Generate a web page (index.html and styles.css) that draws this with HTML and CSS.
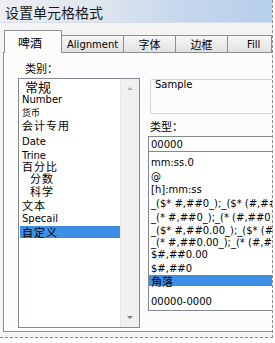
FILE: index.html
```html
<!DOCTYPE html>
<html lang="zh-CN">
<head>
  <meta charset="UTF-8">
  <title>设置单元格格式</title>
  <link rel="stylesheet" href="styles.css">
</head>
<body>
  <div class="window">
    <div class="titlebar">设置单元格格式</div>

    <div class="tabs">
      <div class="tab active">啤酒</div>
      <div class="tab tab-align">Alignment</div>
      <div class="tab tab-font">字体</div>
      <div class="tab tab-border">边框</div>
      <div class="tab tab-fill">Fill</div>
    </div>

    <div class="panel">
      <!-- 类别 -->
      <div class="col-left">
        <div class="label">类别：</div>
        <div class="listbox">
          <ul class="categories">
            <li class="c1 indent big">常规</li>
            <li class="c2">Number</li>
            <li class="c3 small">货币</li>
            <li class="c4 wide">会计专用</li>
            <li class="c5">Date</li>
            <li class="c6">Trine</li>
            <li class="c7 wide">百分比</li>
            <li class="c8 indent2 wide">分数</li>
            <li class="c9 indent2 wide">科学</li>
            <li class="c10 wide">文本</li>
            <li class="c11">Specail</li>
            <li class="c12 wide selected">自定义</li>
          </ul>
          <div class="scrollbar">
            <span class="arrow up"></span>
            <span class="arrow down"></span>
          </div>
        </div>
      </div>

      <!-- 类型 -->
      <div class="col-right">
        <div class="sample"><span>Sample</span></div>
        <div class="label type-label">类型：</div>
        <div class="input">00000</div>
        <ul class="types">
          <li class="t1">mm:ss.0</li>
          <li class="t2">@</li>
          <li class="t3">[h]:mm:ss</li>
          <li class="t4">_($* #,##0_);_($* (#,##0);_($* "-"_);_(@_)</li>
          <li class="t5">_(* #,##0_);_(* (#,##0);_(* "-"_);_(@_)</li>
          <li class="t6">_($* #,##0.00_);_($* (#,##0.00);_($* "-"??_);_(@_)</li>
          <li class="t7">_(* #,##0.00_);_(* (#,##0.00);_(* "-"??_);_(@_)</li>
          <li class="t8">$#,##0.00</li>
          <li class="t9">$#,##0</li>
          <li class="t10 cjk selected">角落</li>
          <li class="t11">00000-0000</li>
        </ul>
      </div>
    </div>
  </div>
</body>
</html>
```

FILE: styles.css
```css
body {
  margin: 0;
  background: #fff;
  font-family: "DejaVu Sans", Verdana, "Noto Sans CJK SC", sans-serif;
  color: #000;
}
.window {
  width: 272px;
  height: 337px;
  overflow: hidden;
  background: #f4f4f4;
  border-right: 1px dashed #8a8a8a;
  border-bottom: 1px dashed #8a8a8a;
}
.titlebar {
  height: 23px;
  line-height: 24px;
  padding-left: 5px;
  font-family: "Noto Sans CJK SC", sans-serif;
  font-size: 14px;
  color: #1a1a1a;
  background: linear-gradient(to right, #eceef1 0%, #dfe6ef 35%, #c3d6ec 70%, #b8cfea 100%);
  border-bottom: 1px solid #d4dde8;
  box-sizing: border-box;
}
.tabs {
  display: flex;
  align-items: flex-end;
  height: 29px;
  padding-left: 4px;
  box-sizing: border-box;
  position: relative;
  z-index: 1;
}
.tab {
  height: 17px;
  line-height: 17px;
  box-sizing: border-box;
  border: 1px solid #8c8e94;
  border-bottom: none;
  border-left: none;
  background: linear-gradient(#f6f6f6, #e2e2e2);
  font-size: 10px;
  text-align: center;
}
.tab.active {
  height: 23px;
  margin-bottom: -1px;
  width: 60px;
  border-left: 1px solid #8c8e94;
  background: #fcfcfc;
  font-family: "Noto Sans CJK SC", sans-serif;
  font-size: 12px;
  line-height: 24px;
  text-align: left;
  padding-left: 13px;
}
.tab-align {
  width: 64px;
}
.tab-font,
.tab-border {
  width: 54px;
  font-family: "Noto Sans CJK SC", sans-serif;
  font-size: 11px;
  line-height: 16px;
}
.tab-fill {
  width: 45px;
  text-align: left;
  padding-left: 19px;
}
.panel {
  display: flex;
  height: 280px;
  margin-left: 3px;
  box-sizing: border-box;
  border: 1px solid #8c8e94;
  border-right: none;
  background: #fcfcfc;
}
.label {
  height: 14px;
  line-height: 14px;
  font-family: "Noto Sans CJK SC", sans-serif;
  font-size: 11px;
}
.col-left {
  padding: 8px 0 0 14px;
}
.col-left .label {
  padding-left: 7px;
  margin-bottom: 3px;
}
.listbox {
  display: flex;
  width: 122px;
  height: 250px;
  box-sizing: border-box;
  border: 1px solid #828790;
  background: #fff;
}
.categories {
  list-style: none;
  margin: 0;
  padding: 0 0 0 1px;
  width: 102px;
}
.categories li {
  height: 13px;
  line-height: 13px;
  padding-left: 2px;
  font-size: 10px;
  white-space: nowrap;
}
.categories .wide {
  font-family: "Noto Sans CJK SC", sans-serif;
  font-size: 11px;
  letter-spacing: 1px;
}
.categories .big {
  font-family: "Noto Sans CJK SC", sans-serif;
  font-size: 13px;
  letter-spacing: 0;
}
.categories .small {
  font-family: "Noto Sans CJK SC", sans-serif;
  font-size: 9px;
}
.categories .indent { padding-left: 5px; }
.categories .indent2 { padding-left: 10px; }
.categories .c1 { height: 14px; line-height: 15px; }
.categories .c5 { height: 18px; line-height: 19px; }
.categories .c6 { height: 10px; line-height: 11px; }
.categories .c7 { height: 12px; line-height: 12px; }
.categories .c8 { height: 12px; line-height: 12px; }
.categories .c9 { height: 14px; line-height: 14px; }
.categories .c10 { height: 14px; line-height: 14px; }
.categories .c11 { height: 14px; line-height: 14px; }
.categories .selected {
  height: 12px;
  line-height: 13px;
  background: #3d8fe6;
}
.scrollbar {
  position: relative;
  width: 18px;
  margin-left: auto;
  background: #f0f0f0;
  border-left: 1px solid #e6e6e6;
}
.arrow {
  position: absolute;
  left: 6px;
  width: 0;
  height: 0;
  border-left: 3px solid transparent;
  border-right: 3px solid transparent;
}
.arrow.up {
  top: 8px;
  border-bottom: 3px solid #b5b5b5;
}
.arrow.down {
  bottom: 8px;
  border-top: 3px solid #7a7a7a;
}
.col-right {
  flex: 1;
  padding: 26px 0 0 8px;
  min-width: 0;
}
.sample {
  height: 35px;
  margin-left: 2px;
  box-sizing: border-box;
  border: 1px solid #d5d5d5;
  border-right: none;
  border-radius: 3px 0 0 3px;
  font-size: 10px;
  padding: 0 0 0 4px;
  line-height: 10px;
}
.type-label {
  margin-top: 5px;
  padding-left: 2px;
}
.input {
  height: 16px;
  margin-top: 3px;
  box-sizing: border-box;
  border: 1px solid #828790;
  border-right: none;
  background: #fff;
  font-size: 10px;
  line-height: 15px;
  padding-left: 2px;
}
.types {
  list-style: none;
  margin: 0;
  padding: 4px 0 0 0;
  height: 159px;
  box-sizing: border-box;
  border: 1px solid #828790;
  border-top: none;
  border-right: none;
  background: #fff;
  overflow: hidden;
}
.types li {
  height: 13px;
  line-height: 14px;
  padding-left: 2px;
  font-size: 10px;
  white-space: nowrap;
}
.types .t1 { height: 14px; }
.types .t3 { height: 14px; }
.types .t4 { height: 14px; }
.types .t5 { height: 14px; }
.types .t6 { height: 12px; line-height: 12px; }
.types .t7 { height: 11px; line-height: 11px; }
.types .t8 { height: 14px; }
.types .cjk {
  font-family: "Noto Sans CJK SC", sans-serif;
  font-size: 11px;
}
.types .selected {
  height: 11px;
  line-height: 12px;
  margin-bottom: 9px;
  background: #3d8fe6;
}
```
